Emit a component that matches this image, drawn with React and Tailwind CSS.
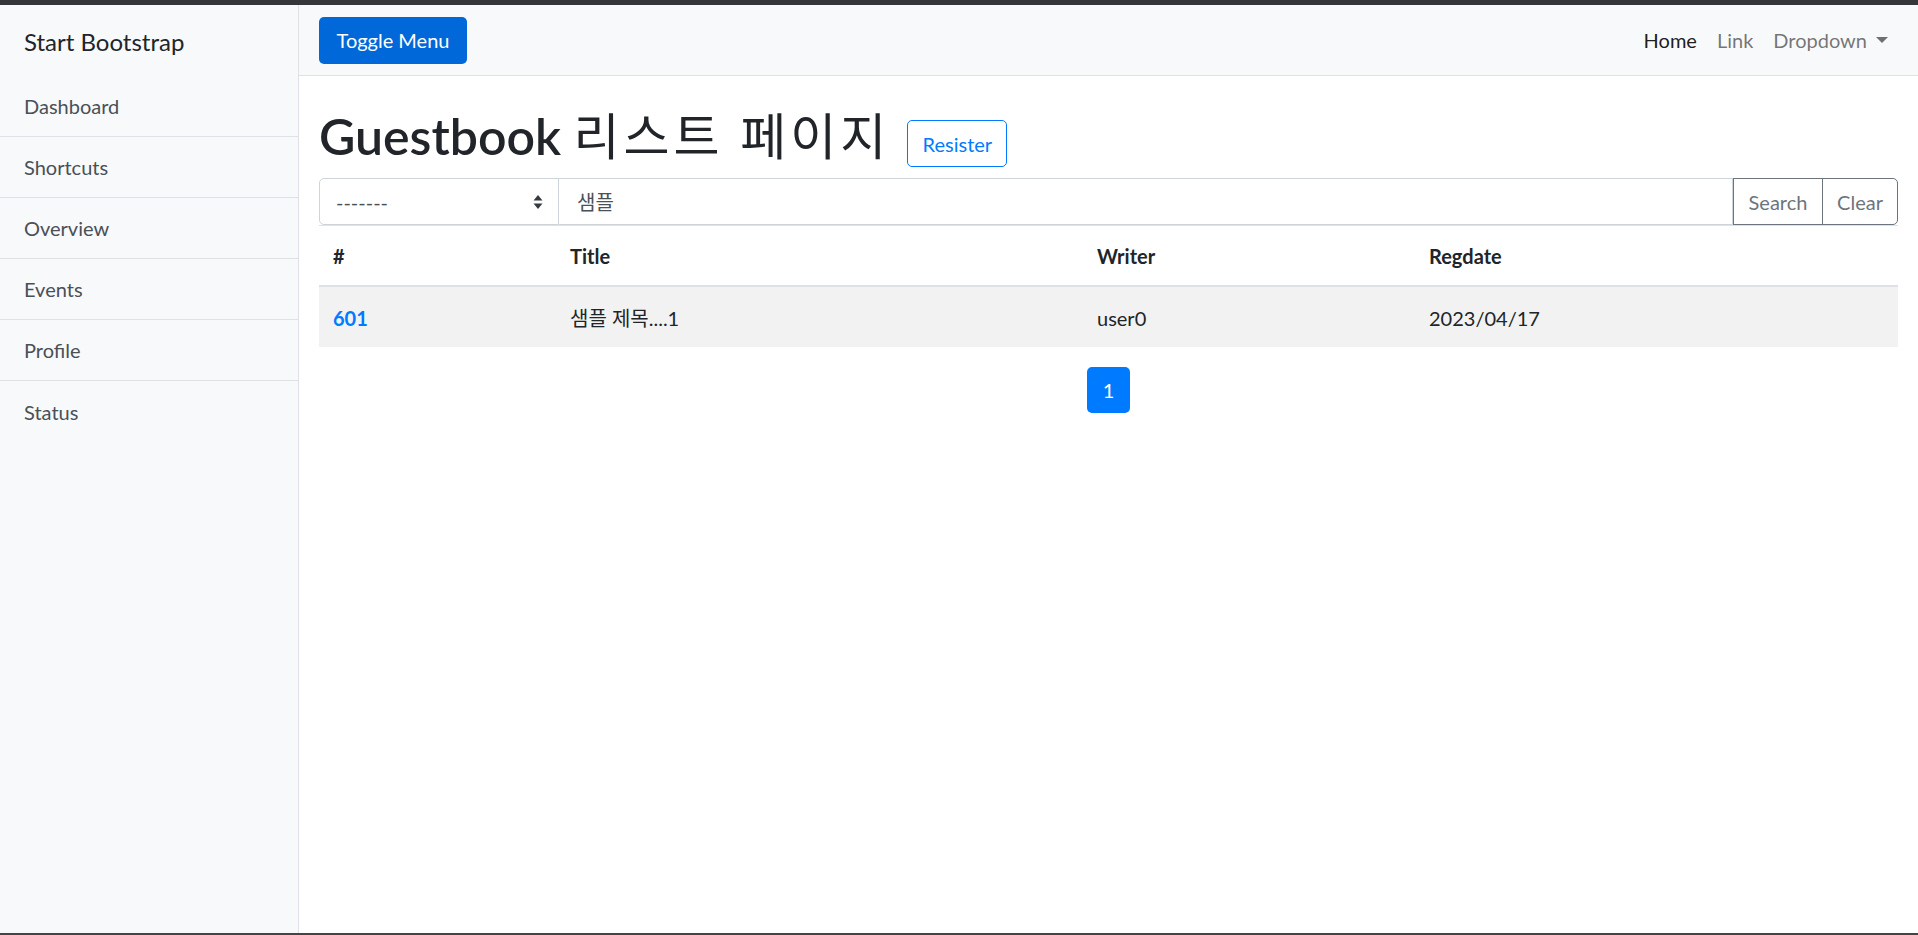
import React from 'react';

const menuItems = ['Dashboard', 'Shortcuts', 'Overview', 'Events', 'Profile', 'Status'];

const rows = [
  { bno: 601, title: '샘플 제목....1', writer: 'user0', regdate: '2023/04/17' },
];

const Sidebar = () => (
  <div className="w-[299px] shrink-0 border-r border-[#dee2e6] bg-[#f8f9fa]">
    <div className="h-[71px] px-[24px] pt-[2px] flex items-center text-[24px] text-[#212529]">
      Start Bootstrap
    </div>
    <div>
      {menuItems.map((item, i) => (
        <div
          key={item}
          className={
            'h-[61px] px-[24px] flex items-center text-[20px] text-[#495057] ' +
            (i < menuItems.length - 1 ? 'border-b border-[#dee2e6]' : '')
          }
        >
          {item}
        </div>
      ))}
    </div>
  </div>
);

const TopNav = () => (
  <div className="h-[71px] shrink-0 flex items-center justify-between bg-[#f8f9fa] border-b border-[#dee2e6] pl-[20px] pr-[20px]">
    <button className="h-[47px] w-[148px] rounded-[5px] bg-[#0068d8] text-white text-[20px]">
      Toggle Menu
    </button>
    <div className="flex items-center text-[20px]">
      <span className="px-[10px] text-[rgba(0,0,0,0.9)]">Home</span>
      <span className="px-[10px] text-[rgba(0,0,0,0.55)]">Link</span>
      <span className="px-[10px] flex items-center text-[rgba(0,0,0,0.55)]">
        Dropdown
        <span className="ml-[9px] w-0 h-0 border-t-[6px] border-t-[rgba(0,0,0,0.55)] border-x-[6px] border-x-transparent" />
      </span>
    </div>
  </div>
);

const SearchBar = () => (
  <div className="flex h-[47px] text-[20px]">
    <div className="w-[240px] flex items-center justify-between border border-[#ced4da] rounded-l-[5px] pl-[16px] pr-[15px] text-[#495057]">
      <span>-------</span>
      <svg width="10" height="14" viewBox="0 0 10 14">
        <path d="M5 0 L9.5 5.5 L0.5 5.5 Z" fill="#343a40" />
        <path d="M5 14 L9.5 8.5 L0.5 8.5 Z" fill="#343a40" />
      </svg>
    </div>
    <div className="flex-1 flex items-center border border-l-0 border-[#ced4da] px-[18px] text-[#495057]">
      샘플
    </div>
    <button className="w-[90px] border border-[#6c757d] text-[#6c757d]">Search</button>
    <button className="w-[76px] -ml-px border border-[#6c757d] text-[#6c757d] rounded-r-[5px]">Clear</button>
  </div>
);

const GuestTable = () => (
  <table className="w-full table-fixed text-[20px] text-[#212529] border-collapse">
    <colgroup>
      <col className="w-[237px]" />
      <col className="w-[527px]" />
      <col className="w-[332px]" />
      <col />
    </colgroup>
    <thead>
      <tr className="border-t border-[#dee2e6] border-b-2">
        {['#', 'Title', 'Writer', 'Regdate'].map((h) => (
          <th key={h} className="text-left font-bold px-[14px] pt-[2px] h-[60px] border-b-2 border-[#dee2e6]">
            {h}
          </th>
        ))}
      </tr>
    </thead>
    <tbody>
      {rows.map((r) => (
        <tr key={r.bno} className="bg-[#f2f2f2]">
          <td className="px-[14px] pt-[3px] h-[61px] font-bold text-[#007bff]">{r.bno}</td>
          <td className="px-[14px] pt-[3px]">{r.title}</td>
          <td className="px-[14px] pt-[3px]">{r.writer}</td>
          <td className="px-[14px] pt-[3px]">{r.regdate}</td>
        </tr>
      ))}
    </tbody>
  </table>
);

export default function App() {
  return (
    <div
      className="w-[1918px] h-[935px] flex flex-col bg-white overflow-hidden"
      style={{ fontFamily: 'Lato, "Noto Sans CJK KR", sans-serif' }}
    >
      <div className="h-[5px] shrink-0 bg-[#35363a]" />
      <div className="flex-1 flex min-h-0">
        <Sidebar />
        <div className="flex-1 flex flex-col">
          <TopNav />
          <div className="px-[20px]">
            <div className="mt-[30px] mb-[11px] flex items-start">
              <h1 className="h-[60px] leading-[60px] text-[50px] font-semibold text-[#212529] whitespace-nowrap">
                Guestbook <span className="font-normal tracking-[4px]">리스트 페이지</span>
              </h1>
              <button className="ml-[17px] mt-[14px] h-[47px] w-[100px] border border-[#007bff] text-[#007bff] rounded-[5px] text-[20px]">
                Resister
              </button>
            </div>
            <SearchBar />
            <GuestTable />
            <div className="flex justify-center mt-[20px]">
              <div className="w-[43px] h-[46px] pt-[1px] flex items-center justify-center rounded-[5px] bg-[#007bff] text-white text-[20px]">
                1
              </div>
            </div>
          </div>
        </div>
      </div>
      <div className="h-[2px] shrink-0 bg-[#444]" />
    </div>
  );
}
